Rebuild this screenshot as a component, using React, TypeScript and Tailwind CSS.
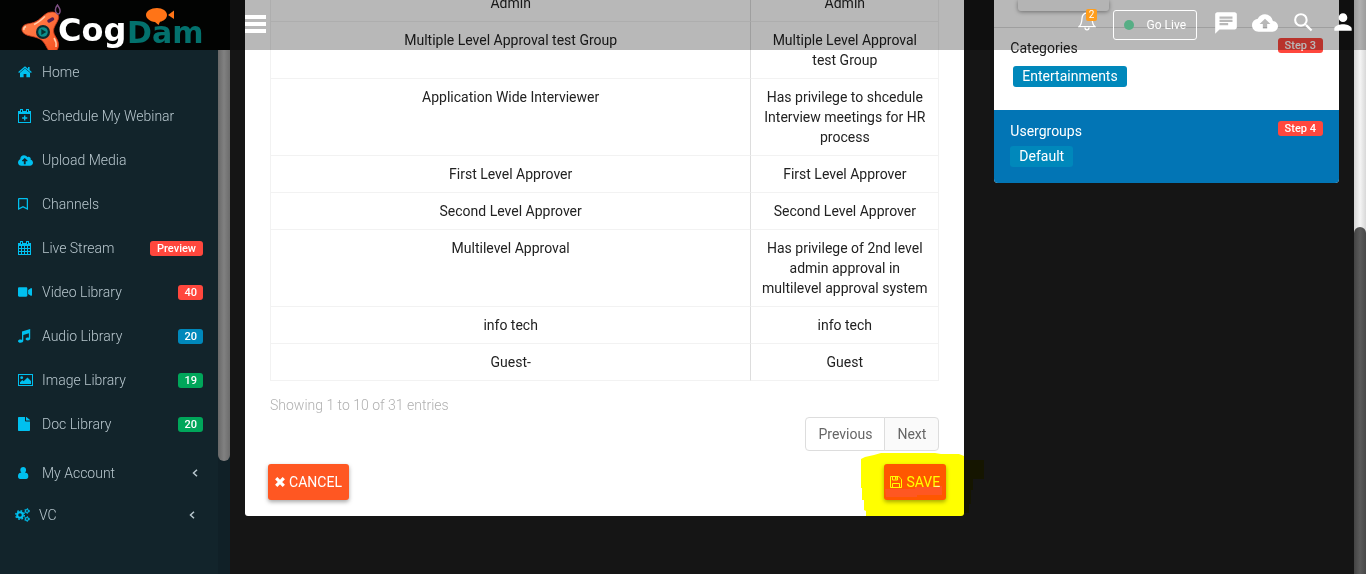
import type { ReactNode } from "react";
import { FaCloudUploadAlt, FaFile, FaRegBookmark, FaVideo } from "react-icons/fa";
import { MdChat, MdCloudUpload, MdPerson, MdSearch } from "react-icons/md";

function HomeIcon() {
  return (
    <svg width="14" height="12" viewBox="0 0 14 12" fill="currentColor" aria-hidden="true">
      <path d="M7 2.6 2 6.8V11.3h3.6V8h2.8v3.3H12V6.8z" />
      <path d="M7 0.3 0.2 6l.8.9L7 1.9l6 5 .8-.9-2.2-1.9V1H10v1.8z" />
    </svg>
  );
}

function CalendarPlusIcon() {
  return (
    <svg width="13" height="14" viewBox="0 0 13 14" aria-hidden="true">
      <path d="M0 2h13v12H0zM1 5v8h11V5z" fill="currentColor" fillRule="evenodd" />
      <path d="M2 0h3v4H2zM8 0h3v4H8z" fill="currentColor" />
      <path d="M3 1h1v2H3zM9 1h1v2H9z" fill="#12242b" />
      <path d="M6 6.5h1.4V8.3H9.3v1.4H7.4v1.8H6V9.7H4.1V8.3H6z" fill="currentColor" />
    </svg>
  );
}

function CalendarIcon() {
  return (
    <svg width="13" height="14" viewBox="0 0 13 14" aria-hidden="true">
      <path
        d="M0 2h2V0h3v2h3V0h3v2h2v12H0zM1 5v2h2V5zM4 5v2h2V5zM7 5v2h2V5zM10 5v2h2V5zM1 8v2h2V8zM4 8v2h2V8zM7 8v2h2V8zM10 8v2h2V8zM1 11v2h2v-2zM4 11v2h2v-2zM7 11v2h2v-2zM10 11v2h2v-2zM3 1v2h1V1zM9 1v2h1V1z"
        fill="currentColor"
        fillRule="evenodd"
      />
    </svg>
  );
}

function MusicIcon() {
  return (
    <svg width="13" height="14" viewBox="0 0 13 14" fill="currentColor" aria-hidden="true">
      <path d="M4 2.6 12.2 0v9.6c0 1.2-1.1 1.9-2.4 1.9s-2.2-.6-2.2-1.4.9-1.5 2.2-1.5c.5 0 .8.1 1.1.2V4.2L5.3 5.9v5.8c0 1.200-1.200 2-2.800 2C1 13.700 0 13.100 0 12.200s1-1.600 2.500-1.600c.6 0 1.100.1 1.500.3z" />
    </svg>
  );
}

function PictureIcon() {
  return (
    <svg width="15" height="12" viewBox="0 0 15 12" fill="currentColor" aria-hidden="true">
      <path d="M0 0h15v12H0zM1 1v10h13V1z" fillRule="evenodd" />
      <circle cx="3.7" cy="3.7" r="1.4" />
      <path d="M2 10V8.300l2.300-2.200L5.600 7.300 9.500 3.400 13 6.900V10z" />
    </svg>
  );
}

function UserIcon() {
  return (
    <svg width="11" height="12" viewBox="0 0 11 12" fill="currentColor" aria-hidden="true">
      <path d="M5.200 0c1.700 0 2.900 1.200 2.900 3 0 1.100-.5 2.100-1.200 2.700h.8C9.300 5.700 10.300 7 10.300 9.300c0 1.700-.8 2.700-2.200 2.700H2.200C.8 12 0 11 0 9.300 0 7 1 5.700 2.700 5.700h.8C2.800 5.100 2.300 4.100 2.300 3c0-1.800 1.200-3 2.900-3z" />
    </svg>
  );
}

function GearsIcon() {
  return (
    <svg width="15" height="14" viewBox="0 0 15 14" fill="none" stroke="currentColor" aria-hidden="true">
      <circle cx="5" cy="7" r="2.800" strokeWidth="2" />
      <circle cx="5" cy="7" r="4.300" strokeWidth="1.400" strokeDasharray="1.700 1.680" />
      <circle cx="12" cy="3" r="1.500" strokeWidth="1.200" />
      <circle cx="12" cy="3" r="2.400" strokeWidth="1" strokeDasharray="1.200 1.310" />
      <circle cx="12" cy="11" r="1.500" strokeWidth="1.200" />
      <circle cx="12" cy="11" r="2.400" strokeWidth="1" strokeDasharray="1.200 1.310" />
    </svg>
  );
}

function ChevronIcon() {
  return (
    <svg width="6" height="8" viewBox="0 0 6 8" fill="none" stroke="currentColor" strokeWidth="1.500" aria-hidden="true">
      <path d="M5 .7 1.500 4 5 7.300" />
    </svg>
  );
}

function BellIcon() {
  return (
    <svg width="18" height="20" viewBox="0 0 18 20" fill="none" stroke="currentColor" strokeWidth="1.300" aria-hidden="true">
      <path d="M9 2.200C5.900 2.200 4.200 4.500 4 7.500 3.800 11 3.500 13.500 1.200 15.600h15.600C14.500 13.500 14.200 11 14 7.500 13.800 4.500 12.100 2.200 9 2.200z" />
      <path d="M7 16.500c0 1.400.9 2.300 2 2.300s2-.9 2-2.300" />
      <path d="M9 2.200V.8" />
    </svg>
  );
}

function CrossIcon() {
  return (
    <svg width="10" height="10" viewBox="0 0 10 10" stroke="currentColor" strokeWidth="3.200" aria-hidden="true">
      <path d="M1.200 1.200 8.800 8.800M8.800 1.200 1.200 8.800" />
    </svg>
  );
}

function FloppyIcon() {
  return (
    <svg width="12" height="12" viewBox="0 0 12 12" fill="none" stroke="currentColor" aria-hidden="true">
      <path d="M.5.5h8.300l2.700 2.700v8.300H.5zM2.500 11.500v-4h7v4M2.500.5v3.500h5V.5" />
      <path d="M5 1h1.500v2.500H5z" fill="currentColor" stroke="none" />
    </svg>
  );
}

function Logo() {
  return (
    <svg width="218" height="50" viewBox="0 0 218 50" role="img" aria-label="CogDam">
      <defs>
        <linearGradient id="spinner" x1="0" y1="0" x2="1" y2="1">
          <stop offset="0" stopColor="#ff8a50" />
          <stop offset="0.500" stopColor="#ff6f3c" />
          <stop offset="1" stopColor="#f4501f" />
        </linearGradient>
      </defs>
      <path
        d="M45 14.500c3-2.500 7-3 10-2 3.500 1.200 4.500 4 3 7.500-1.500 3.800-4.500 7-4.500 11 0 4.500 4.500 7.500 5 12.500.3 3.500-.8 6.500-3 8h-6c-2.500-2.500-3.500-6.500-6-9.500-2.500-3-5.500-4-9-5-4.500-1.200-9-1.500-11.500-4.500-2.500-3.200-.5-7.500 4-8.500 3-.7 6-.8 9-2.500 3.500-2 6-4.700 9-7z"
        fill="url(#spinner)"
        stroke="#c83a1c"
        strokeWidth="0.800"
      />
      <path d="M45 16.500c-4 3.500-7 6.500-11 8M26 26.500c-1.500.6-2.500 2-2 3.500M54 38c2 3 2.500 5.500 2 9" stroke="#ffd0ae" strokeWidth="1.500" fill="none" />
      <circle cx="43" cy="32" r="7" fill="#0b2c30" />
      <circle cx="43" cy="32" r="4.800" fill="#0c8f8b" />
      <path d="M41.300 29v6l5-3z" fill="#06302f" />
      <path d="M57.500 5c-3 3.500-2.500 7-.5 8.500 2 1.300 3.500-.5 3-3.500-.3-2-1.500-3-2.500-5z" fill="none" stroke="#7e5184" strokeWidth="1.500" />
      <path d="m52.500 19-3.500 2" stroke="#522052" strokeWidth="3.500" strokeLinecap="round" />
      <text x="58" y="41" fill="#fff" fontFamily="DejaVu Sans" fontWeight="700" fontSize="32">Cog</text>
      <text x="127" y="43" fill="#03716d" fontFamily="DejaVu Sans" fontWeight="700" fontSize="30">Dam</text>
      <path d="M157 8c5.500 0 10 3 10 7 0 3.300-3 6-7 6.800L158.500 25l-3.500-3.100c-5-.4-9-3.400-9-6.900 0-4 5-7 11-7z" fill="#ff7417" />
      <path d="m168 15 6-4.500v8.500z" fill="#ff7417" />
    </svg>
  );
}

type NavItem = {
  label: string;
  icon: ReactNode;
  badge?: string;
  tone?: "red" | "blue" | "green";
};

const tones = {
  red: "bg-[#ff473d]",
  blue: "bg-[#0088bb]",
  green: "bg-[#00a65a]",
};

const navItems: NavItem[] = [
  { label: "Home", icon: <HomeIcon /> },
  { label: "Schedule My Webinar", icon: <CalendarPlusIcon /> },
  { label: "Upload Media", icon: <FaCloudUploadAlt size={15} /> },
  { label: "Channels", icon: <FaRegBookmark className="h-3 w-[10px]" preserveAspectRatio="none" /> },
  { label: "Live Stream", icon: <CalendarIcon />, badge: "Preview", tone: "red" },
  { label: "Video Library", icon: <FaVideo size={14} />, badge: "40", tone: "red" },
  { label: "Audio Library", icon: <MusicIcon />, badge: "20", tone: "blue" },
  { label: "Image Library", icon: <PictureIcon />, badge: "19", tone: "green" },
  { label: "Doc Library", icon: <FaFile className="h-[14px] w-3" preserveAspectRatio="none" />, badge: "20", tone: "green" },
];

const rows = [
  ["Admin", "Admin"],
  ["Multiple Level Approval test Group", "Multiple Level Approval test Group"],
  ["Application Wide Interviewer", "Has privilege to shcedule Interview meetings for HR process"],
  ["First Level Approver", "First Level Approver"],
  ["Second Level Approver", "Second Level Approver"],
  ["Multilevel Approval", "Has privilege of 2nd level admin approval in multilevel approval system"],
  ["info tech", "info tech"],
  ["Guest-", "Guest"],
];

function Badge({ children, tone }: { children: string; tone: keyof typeof tones }) {
  const padding = children.length > 2 ? "px-[7px]" : "px-[6px]";
  return (
    <span className={`inline-block h-[15px] rounded-[3px] text-center text-[11px] leading-[15px] font-medium text-white ${padding} ${tones[tone]}`}>
      {children}
    </span>
  );
}

function Sidebar() {
  return (
    <aside className="flex w-[230px] shrink-0 flex-col bg-[#12242b] text-[#b8c7ce]">
      <a href="#" className="block h-[50px] bg-[#020302]">
        <Logo />
      </a>
      <div className="flex flex-1">
        <nav className="flex-1 font-light">
          <ul>
            {navItems.map((item) => (
              <li key={item.label}>
                <a href="#" className="flex h-11 items-center pr-[15px] pl-[18px]">
                  <span className="w-6 text-[#00c0ef]">{item.icon}</span>
                  <span className="flex-1">{item.label}</span>
                  {item.badge && item.tone && <Badge tone={item.tone}>{item.badge}</Badge>}
                </a>
              </li>
            ))}
          </ul>
          <ul className="pt-[6px]">
            <li>
              <a href="#" className="flex h-[42px] items-center pr-5 pl-[18px]">
                <span className="w-6 text-[#00c0ef]"><UserIcon /></span>
                <span className="flex-1">My Account</span>
                <ChevronIcon />
              </a>
            </li>
            <li>
              <a href="#" className="flex h-[42px] items-center pr-[23px] pl-[15px]">
                <span className="w-6 text-[#00c0ef]"><GearsIcon /></span>
                <span className="flex-1">VC</span>
                <ChevronIcon />
              </a>
            </li>
          </ul>
        </nav>
        <div className="w-3 bg-[#102027]">
          <div className="h-[411px] rounded-b-md bg-linear-to-r from-[#686868] via-[#818181] to-[#6c6c6c]" />
        </div>
      </div>
    </aside>
  );
}

function TopBar() {
  return (
    <header className="absolute inset-x-0 top-0 z-10 flex h-[50px] items-start justify-between bg-black/28 pr-[10px] pl-[15px] text-white">
      <button type="button" aria-label="Toggle navigation" className="mt-[15px] flex flex-col gap-[3px]">
        <span className="h-1 w-[21px] bg-white" />
        <span className="h-1 w-[21px] bg-white" />
        <span className="h-1 w-[21px] bg-white" />
      </button>
      <div className="flex items-start">
        <button type="button" aria-label="Notifications" className="relative mt-[11px] mr-4 h-5 w-[19px]">
          <BellIcon />
          <span className="absolute -top-[2px] right-0 h-3 w-[11px] rounded-[2px] bg-[#ff9d1c] text-center text-[10px] leading-3">2</span>
        </button>
        <button type="button" className="mt-[10px] flex h-[30px] w-[84px] items-center justify-between rounded-[3px] border border-white px-[10px] text-xs">
          <span className="size-[10px] rounded-full bg-[#57ae85]" />
          Go Live
        </button>
        <button type="button" aria-label="Messages" className="mt-[10px] ml-4"><MdChat size={26} /></button>
        <button type="button" aria-label="Upload" className="mt-[10px] ml-[13px]"><MdCloudUpload size={26} /></button>
        <button type="button" aria-label="Search" className="mt-[10px] ml-[13px]"><MdSearch size={25} /></button>
        <button type="button" aria-label="Profile" className="mt-[9px] ml-[14px]"><MdPerson size={26} /></button>
      </div>
    </header>
  );
}

function GroupsCard() {
  return (
    <section className="-mt-[15px] rounded-[3px] bg-white px-[25px] pb-4 text-[#222]">
      <table className="w-full table-fixed border-separate border-spacing-0 border-x border-[#f2f2f2] text-center">
        <colgroup>
          <col />
          <col className="w-[187px]" />
        </colgroup>
        <tbody>
          {rows.map(([name, description]) => (
            <tr key={name}>
              <td className="border-r border-b border-r-[#ddd] border-b-[#f2f2f2] px-[9px] py-2 align-top">{name}</td>
              <td className="border-b border-[#f2f2f2] px-[9px] py-2 align-top">{description}</td>
            </tr>
          ))}
        </tbody>
      </table>
      <p className="pt-[14px] font-light text-[#b0b0b0]">Showing 1 to 10 of 31 entries</p>
      <div className="mt-[2px] flex justify-end text-[#666]">
        <button type="button" className="h-[34px] rounded-l-[4px] border border-[#ddd] px-3">Previous</button>
        <button type="button" className="-ml-px h-[34px] rounded-r-[4px] border border-[#ddd] bg-[#fafafa] px-3">Next</button>
      </div>
      <div className="relative -ml-[2px] mt-[13px] flex justify-between pr-5 text-white">
        <button type="button" className="flex h-9 w-[81px] items-center justify-center gap-1 rounded-[3px] bg-[#ff5722] shadow-[0_2px_4px_rgba(0,0,0,0.35)]">
          <CrossIcon /> CANCEL
        </button>
        <button type="button" className="-mr-[27px] flex h-9 w-[62px] items-center justify-center gap-1 rounded-[3px] bg-[#ff5722] shadow-[0_2px_4px_rgba(0,0,0,0.35)]">
          <FloppyIcon /> SAVE
        </button>
        <svg
          className="pointer-events-none absolute -top-[11px] -right-[46px] mix-blend-multiply"
          width="124"
          height="64"
          viewBox="0 0 124 64"
          fill="#ffff00"
          aria-hidden="true"
        >
          <path
            d="M0 6 4 4 13 2 20 0H74L80 1H98L103 3V7H123V26H112V37H110V51H108V60H103V63H5V58L3 57V47H1V35H0ZM24 36H54V34H70L81 33V42H56V44H25Z"
            fillRule="evenodd"
          />
        </svg>
      </div>
    </section>
  );
}

function DetailsCard() {
  return (
    <section className="overflow-hidden rounded-b-[4px] bg-white text-[#222]">
      <div className="h-7 border-b border-[#ddd] px-6">
        <div className="h-[11px] w-[91px] rounded-b-[3px] bg-[#fafafa] shadow-[0_1px_4px_rgba(0,0,0,0.4)]" />
      </div>
      <div className="h-[82px] px-4 pt-[10px]">
        <div className="flex items-start justify-between">
          <h3>Categories</h3>
          <Badge tone="red">Step 3</Badge>
        </div>
        <span className="mt-2 ml-[3px] inline-block h-[21px] rounded-[3px] bg-[#0088bb] px-[9px] leading-[21px] text-white">
          Entertainments
        </span>
      </div>
      <div className="h-[73px] bg-[#0275b5] px-4 pt-[11px] text-white">
        <div className="flex items-start justify-between">
          <h3>Usergroups</h3>
          <Badge tone="red">Step 4</Badge>
        </div>
        <span className="mt-[5px] inline-block h-[21px] rounded-[3px] bg-[#0088bb] px-[9px] leading-[21px]">Default</span>
      </div>
    </section>
  );
}

export default function App() {
  return (
    <div className="flex h-screen overflow-hidden bg-[#151515] font-['Roboto','Liberation_Sans',sans-serif] text-[14px] leading-5">
      <Sidebar />
      <div className="relative flex min-w-0 flex-1">
        <TopBar />
        <main className="flex min-w-0 flex-1 items-start">
          <div className="w-2/3 px-[15px]"><GroupsCard /></div>
          <div className="w-1/3 px-[15px]"><DetailsCard /></div>
        </main>
        <div className="flex w-3 flex-col bg-linear-to-r from-[#d6d6d6] via-[#f5f5f5] to-[#d8d8d8]">
          <div className="mt-[227px] flex-1 rounded-t-md bg-linear-to-r from-[#444] via-[#5a5a5a] to-[#484848]" />
        </div>
      </div>
    </div>
  );
}
